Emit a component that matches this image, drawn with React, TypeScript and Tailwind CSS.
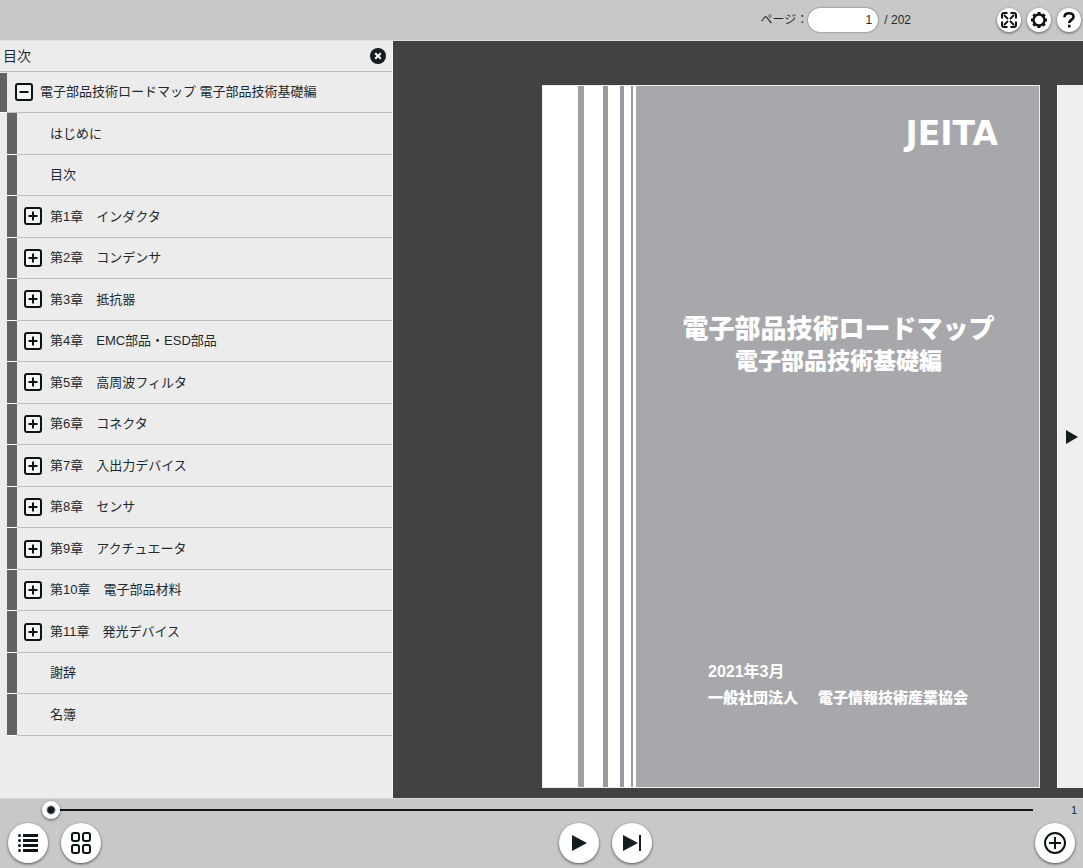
import { useState } from "react"

type Chapter = {
  title: string
  hasChildren?: boolean
}

const TOTAL_PAGES = 202

const chapters: Chapter[] = [
  { title: "はじめに" },
  { title: "目次" },
  { title: "第1章　インダクタ", hasChildren: true },
  { title: "第2章　コンデンサ", hasChildren: true },
  { title: "第3章　抵抗器", hasChildren: true },
  { title: "第4章　EMC部品・ESD部品", hasChildren: true },
  { title: "第5章　高周波フィルタ", hasChildren: true },
  { title: "第6章　コネクタ", hasChildren: true },
  { title: "第7章　入出力デバイス", hasChildren: true },
  { title: "第8章　センサ", hasChildren: true },
  { title: "第9章　アクチュエータ", hasChildren: true },
  { title: "第10章　電子部品材料", hasChildren: true },
  { title: "第11章　発光デバイス", hasChildren: true },
  { title: "謝辞" },
  { title: "名簿" },
]

function ToggleIcon({ open }: { open?: boolean }) {
  return (
    <svg viewBox="0 0 18 18" className="size-[18px] shrink-0" fill="none" stroke="#0b1519" strokeWidth="2">
      <rect x="1" y="1" width="16" height="16" rx="2" fill="#f6f6f6" />
      <path d={open ? "M4.5 9h9" : "M4.5 9h9M9 4.5v9"} />
    </svg>
  )
}

function FullscreenIcon() {
  return (
    <svg viewBox="0 0 16 16" className="size-4" fill="none" stroke="#0b1519" strokeWidth="2">
      <path d="M1 6.500V3Q1 1 3 1h3.500M9.500 1H13q2 0 2 2v3.500M15 9.500V13q0 2-2 2H9.500M6.500 15H3q-2 0-2-2V9.500" />
      <path d="M3 3l4 4M13 3 9 7M3 13l4-4M13 13 9 9" strokeWidth="1.800" />
    </svg>
  )
}

function GearIcon() {
  return (
    <svg viewBox="0 0 16 16" className="size-4" fill="none" stroke="#0b1519">
      <circle cx="8" cy="8" r="5.500" strokeWidth="2.400" />
      <path
        d="M8 0v2.500M8 13.500V16M0 8h2.500M13.500 8H16M2.350 2.350l1.600 1.600M12.050 12.050l1.600 1.600M2.350 13.650l1.600-1.600M12.050 3.950l1.600-1.600"
        strokeWidth="3"
      />
    </svg>
  )
}

function HelpIcon() {
  return (
    <svg viewBox="0 0 16 16" className="size-4" fill="none" stroke="#0b1519" strokeWidth="2.600">
      <path d="M3.500 5.200C3.500 2.700 5.300 1.300 8 1.300s4.500 1.300 4.500 3.600C12.500 7.600 8.300 7.700 8.300 11" />
      <path d="M8.300 12.800v2.700" />
    </svg>
  )
}

const smallButton =
  "flex size-6 items-center justify-center rounded-full bg-white shadow-[0_1px_3px_rgba(0,0,0,0.55)]"
const roundButton =
  "flex size-10 items-center justify-center rounded-full bg-white shadow-[0_1px_3px_rgba(0,0,0,0.6)]"

export default function App() {
  const [page, setPage] = useState(1)
  const [showToc, setShowToc] = useState(true)

  return (
    <div className="flex min-h-screen flex-col bg-[#c8c8c8] font-['Liberation_Sans','Noto_Sans_CJK_JP',sans-serif] text-[13px] text-[#1c2a2e]">

      {/* TOP BAR */}

      <header className="flex h-[41px] items-center justify-end border-b border-[#dcdcdc] bg-[#c8c8c8] pr-0.5">

        <label htmlFor="page" className="text-xs">ページ：</label>
        <input
          id="page"
          type="text"
          value={page}
          onChange={(e) => setPage(Number(e.target.value) || 1)}
          className="h-6 w-[70px] rounded-full bg-white pr-1.5 text-right text-xs shadow-[0_0_2px_rgba(0,0,0,0.6)] outline-none"
        />
        <span className="ml-1.5 text-xs">/ {TOTAL_PAGES}</span>

        <div className="ml-[86px] flex gap-1.5">
          <button aria-label="全画面" className={smallButton}>
            <FullscreenIcon />
          </button>
          <button aria-label="設定" className={smallButton}>
            <GearIcon />
          </button>
          <button aria-label="ヘルプ" className={smallButton}>
            <HelpIcon />
          </button>
        </div>

      </header>

      <main className="flex flex-1 bg-[#424242]">

        {/* TABLE OF CONTENTS */}

        {showToc && (
          <aside className="w-[393px] shrink-0 border-r border-[#f8f8f8] bg-[#ececec]">

            <div className="flex h-[31px] items-center justify-between border-b border-[#bdbdbd] pr-1.5 pl-[3px]">
              <h2 className="text-sm">目次</h2>
              <button aria-label="閉じる" onClick={() => setShowToc(false)}>
                <svg viewBox="0 0 16 16" className="size-4">
                  <circle cx="8" cy="8" r="8" fill="#151d20" />
                  <path d="M5.200 5.200l5.600 5.600M10.800 5.200l-5.600 5.600" stroke="#fff" strokeWidth="2" />
                </svg>
              </button>
            </div>

            <div className="flex h-[41px]">
              <span className="mt-px w-[7px] border-b border-white bg-[#636363]" />
              <button className="flex flex-1 items-center gap-[7px] border-b border-[#bdbdbd] pl-2 text-left">
                <ToggleIcon open />
                電子部品技術ロードマップ 電子部品技術基礎編
              </button>
            </div>

            <ul className="grid min-h-[623px] auto-rows-fr pl-[7px]">
              {chapters.map((chapter) => (
                <li key={chapter.title} className="flex">
                  <span className="w-2.5 border-b border-white bg-[#636363]" />
                  <button className="flex flex-1 items-center gap-2 border-b border-[#bdbdbd] pl-[7px] text-left">
                    {chapter.hasChildren ? <ToggleIcon /> : <span className="w-[18px]" />}
                    {chapter.title}
                  </button>
                </li>
              ))}
            </ul>

          </aside>
        )}

        {/* PAGES */}

        <section className="flex flex-1 justify-end gap-[17px] overflow-hidden pt-11 pb-2.5">

          <article className="flex w-[498px] shrink-0 border border-[#eeeeee] bg-white font-['Liberation_Sans','Noto_Sans_CJK_JP',sans-serif] font-bold text-white">
            <span className="ml-[35px] w-1.5 bg-[#9fa0a5]" />
            <span className="ml-[19px] w-[5px] bg-[#9a9b9e]" />
            <span className="ml-3 w-1 bg-[#9a9ba1]" />
            <span className="ml-[7px] w-0.5 bg-[#9a9a9e]" />

            <div className="ml-[3px] flex flex-1 flex-col bg-[#a8a8ac]">
              <p className="mt-8 mr-[41px] text-right font-['DejaVu_Sans',sans-serif] text-[33px] leading-8">
                JEITA
              </p>
              <h1 className="mt-[163px] pl-0.5 text-center text-[26px] leading-8 font-black">
                電子部品技術ロードマップ
                <span className="block text-[23px]">電子部品技術基礎編</span>
              </h1>
              <div className="mt-auto mb-[76px] pl-[72px]">
                <p className="text-base leading-[26px]">2021年3月</p>
                <p className="flex gap-5 text-[15px] leading-[26px] font-black">
                  <span>一般社団法人</span>
                  <span>電子情報技術産業協会</span>
                </p>
              </div>
            </div>
          </article>

          <button
            aria-label="次のページ"
            onClick={() => setPage(Math.min(page + 1, TOTAL_PAGES))}
            className="flex w-[26px] shrink-0 items-center border-l border-white bg-[#eeeeee] pl-2"
          >
            <svg viewBox="0 0 12 14" className="h-3.5 w-3" fill="#151d20">
              <path d="M0 0 12 7 0 14z" />
            </svg>
          </button>

        </section>

      </main>

      {/* BOTTOM BAR */}

      <footer className="h-[70px] border-t border-[#d8d8d8] bg-[#c8c8c8] pt-0.5">

        <div className="flex h-[18px] items-center pr-1.5 pl-[42px]">
          <input
            type="range"
            aria-label="ページ位置"
            min={1}
            max={TOTAL_PAGES}
            value={page}
            onChange={(e) => setPage(Number(e.target.value))}
            className="h-[18px] flex-1 appearance-none bg-transparent [&::-webkit-slider-runnable-track]:h-0.5 [&::-webkit-slider-runnable-track]:bg-[#101a1e] [&::-webkit-slider-thumb]:-mt-2 [&::-webkit-slider-thumb]:size-[18px] [&::-webkit-slider-thumb]:appearance-none [&::-webkit-slider-thumb]:rounded-full [&::-webkit-slider-thumb]:bg-[radial-gradient(circle,#101a1e_3px,#fff_5px)] [&::-webkit-slider-thumb]:shadow-[0_1px_3px_rgba(0,0,0,0.6)]"
          />
          <output className="w-11 text-right text-[11px]">{page}</output>
        </div>

        <div className="mt-1 grid grid-cols-[1fr_auto_1fr] px-2">

          <div className="flex gap-[13px]">
            <button aria-label="目次" aria-pressed={showToc} onClick={() => setShowToc(!showToc)} className={roundButton}>
              <svg viewBox="0 0 20 18" className="h-[18px] w-5" fill="#0b1519">
                <path d="M5 0h15v3H5zM5 5h15v3H5zM5 10h15v3H5zM5 15h15v3H5z" />
                <circle cx="1.500" cy="1.500" r="1.500" />
                <circle cx="1.500" cy="6.500" r="1.500" />
                <circle cx="1.500" cy="11.500" r="1.500" />
                <circle cx="1.500" cy="16.500" r="1.500" />
              </svg>
            </button>
            <button aria-label="サムネイル" className={roundButton}>
              <svg viewBox="0 0 20 22" className="h-[22px] w-5" fill="none" stroke="#0b1519" strokeWidth="2">
                <rect x="1" y="1" width="7" height="8" rx="2" />
                <rect x="12" y="1" width="7" height="8" rx="2" />
                <rect x="1" y="13" width="7" height="8" rx="2" />
                <rect x="12" y="13" width="7" height="8" rx="2" />
              </svg>
            </button>
          </div>

          <div className="flex gap-[13px] pl-[127px]">
            <button
              aria-label="次へ"
              onClick={() => setPage(Math.min(page + 1, TOTAL_PAGES))}
              className={roundButton}
            >
              <svg viewBox="0 0 16 16" className="size-4" fill="#151d20">
                <path d="M1 0 16 8 1 16z" />
              </svg>
            </button>
            <button aria-label="最後へ" onClick={() => setPage(TOTAL_PAGES)} className={roundButton}>
              <svg viewBox="0 0 18 16" className="h-4 w-[18px]" fill="#151d20">
                <path d="M0 0 15 8 0 16zM16 0h2v16h-2z" />
              </svg>
            </button>
          </div>

          <button aria-label="拡大" className={`${roundButton} justify-self-end`}>
            <svg viewBox="0 0 22 22" className="size-[22px]" fill="none" stroke="#0b1519" strokeWidth="2">
              <circle cx="11" cy="11" r="10" />
              <path d="M5 11h12M11 5v12" />
            </svg>
          </button>

        </div>

      </footer>

    </div>
  )
}
